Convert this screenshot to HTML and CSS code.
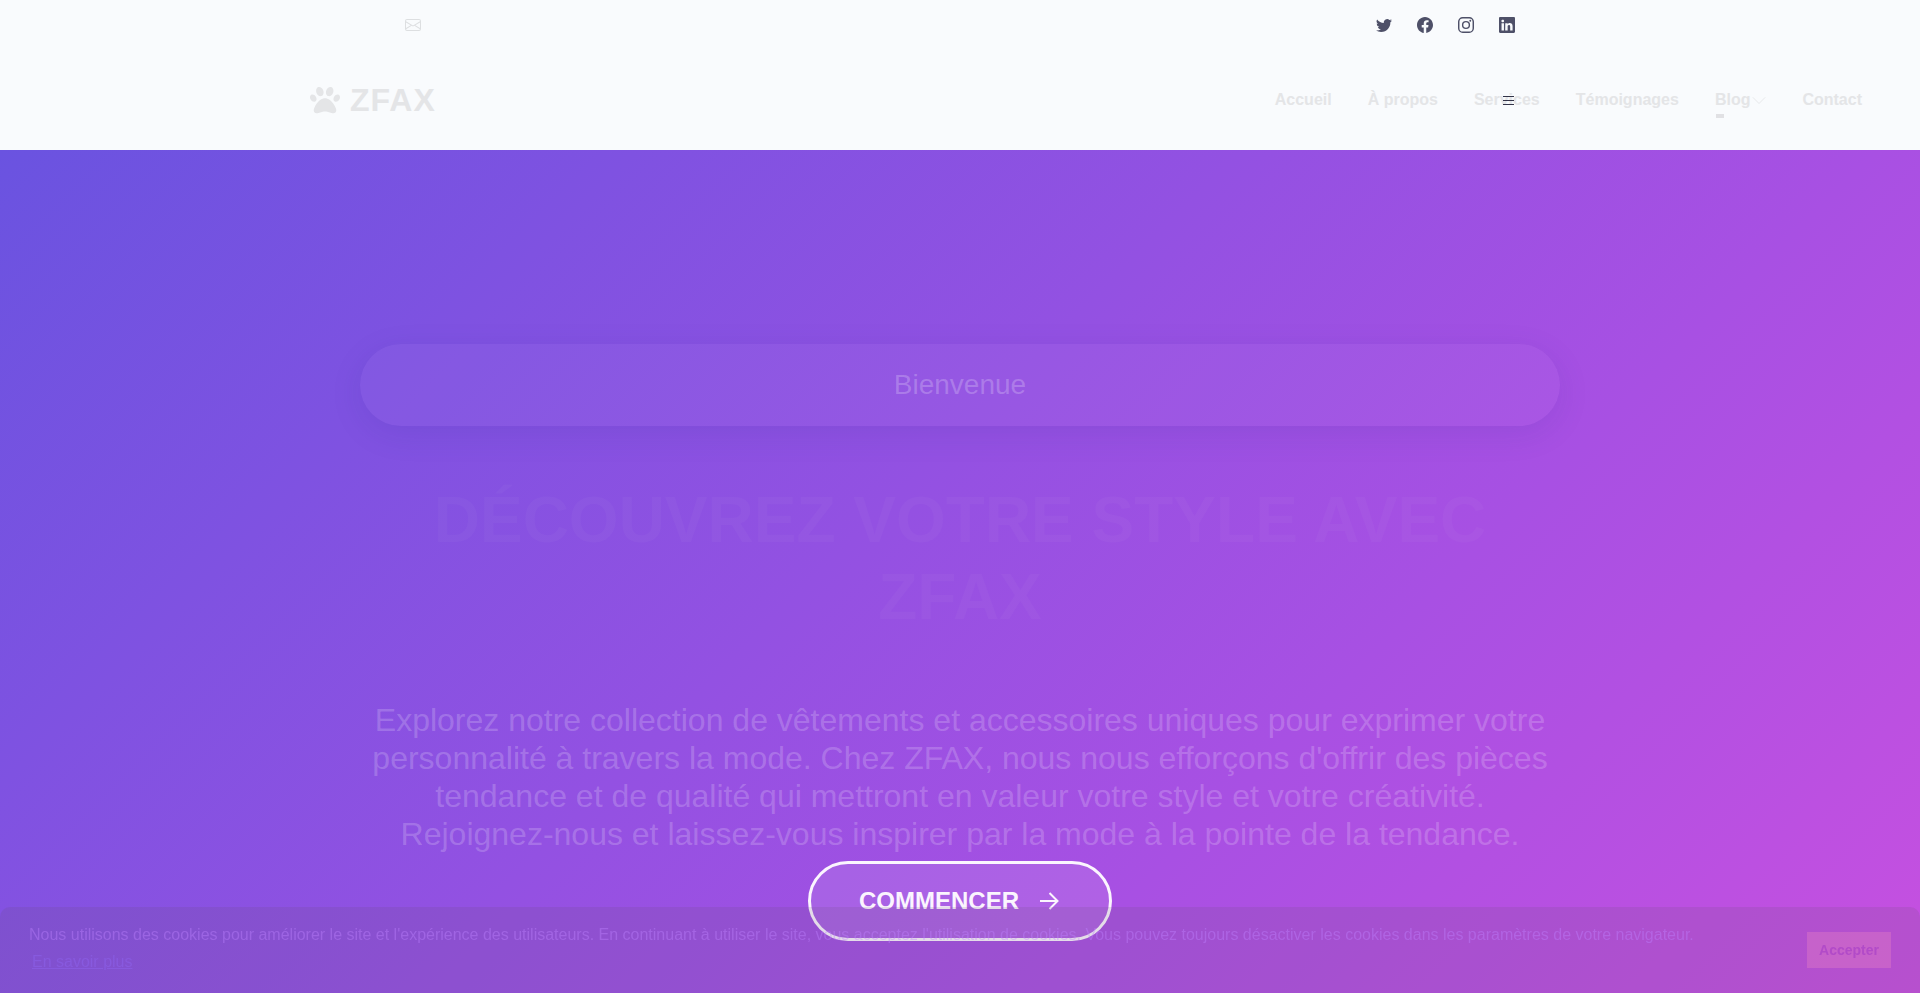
FILE: index.html
```html
<!DOCTYPE html>
<html lang="fr">
<head>
  <meta charset="UTF-8">
  <meta name="viewport" content="width=device-width, initial-scale=1.0">
  <title>ZFAX</title>

  <link rel="stylesheet" href="styles.css">
</head>
<body>
  <div class="topbar">
    <div class="topbar-inner">
      <a class="mail" href="#" aria-label="E-mail">
        <svg class="icon" viewBox="0 0 16 16"><path d="M0 4a2 2 0 0 1 2-2h12a2 2 0 0 1 2 2v8a2 2 0 0 1-2 2H2a2 2 0 0 1-2-2V4Zm2-1a1 1 0 0 0-1 1v.217l7 4.2 7-4.2V4a1 1 0 0 0-1-1H2Zm13 2.383-4.708 2.825L15 11.105V5.383Zm-.034 6.876-5.64-3.471L8 9.583l-1.326-.795-5.64 3.47A1 1 0 0 0 2 13h12a1 1 0 0 0 .966-.741ZM1 11.105l4.708-2.897L1 5.383v5.722Z"/></svg>
      </a>
      <div class="social">
        <a href="#" aria-label="Twitter">
          <svg class="icon" viewBox="0 0 16 16"><path d="M5.026 15c6.038 0 9.341-5.003 9.341-9.334 0-.14 0-.282-.006-.422A6.685 6.685 0 0 0 16 3.542a6.658 6.658 0 0 1-1.889.518 3.301 3.301 0 0 0 1.447-1.817 6.533 6.533 0 0 1-2.087.793A3.286 3.286 0 0 0 7.875 6.03a9.325 9.325 0 0 1-6.767-3.429 3.289 3.289 0 0 0 1.018 4.382A3.323 3.323 0 0 1 .64 6.575v.045a3.288 3.288 0 0 0 2.632 3.218 3.203 3.203 0 0 1-.865.115 3.23 3.23 0 0 1-.614-.057 3.283 3.283 0 0 0 3.067 2.277A6.588 6.588 0 0 1 .78 13.58a6.32 6.32 0 0 1-.78-.045A9.344 9.344 0 0 0 5.026 15z"/></svg>
        </a>
        <a href="#" aria-label="Facebook">
          <svg class="icon" viewBox="0 0 16 16"><path d="M16 8.049c0-4.446-3.582-8.05-8-8.05C3.58 0-.002 3.603-.002 8.05c0 4.017 2.926 7.347 6.75 7.951v-5.625h-2.03V8.05H6.75V6.275c0-2.017 1.195-3.131 3.022-3.131.876 0 1.791.157 1.791.157v1.98h-1.009c-.993 0-1.303.621-1.303 1.258v1.51h2.218l-.354 2.326H9.25V16c3.824-.604 6.75-3.934 6.75-7.951z"/></svg>
        </a>
        <a href="#" aria-label="Instagram">
          <svg class="icon" viewBox="0 0 16 16"><path fill-rule="evenodd" d="M4.7 0h6.6A4.7 4.7 0 0 1 16 4.7v6.6a4.7 4.7 0 0 1-4.700 4.700H4.700A4.700 4.700 0 0 1 0 11.300V4.700A4.700 4.700 0 0 1 4.700 0Zm.1 1.450A3.350 3.350 0 0 0 1.450 4.800v6.400a3.350 3.350 0 0 0 3.350 3.350h6.400a3.350 3.350 0 0 0 3.350-3.350V4.800a3.350 3.350 0 0 0-3.350-3.350H4.800ZM8 3.892a4.108 4.108 0 1 1 0 8.216 4.108 4.108 0 0 1 0-8.216Zm0 1.441a2.667 2.667 0 1 0 0 5.334 2.667 2.667 0 0 0 0-5.334Zm4.270-2.563a.96.96 0 1 1 0 1.920.96.96 0 0 1 0-1.920Z"/></svg>
        </a>
        <a href="#" aria-label="LinkedIn">
          <svg class="icon" viewBox="0 0 16 16"><path d="M0 1.146C0 .513.526 0 1.175 0h13.650C15.474 0 16 .513 16 1.146v13.708c0 .633-.526 1.146-1.175 1.146H1.175C.526 16 0 15.487 0 14.854V1.146zm4.943 12.248V6.169H2.542v7.225h2.401zm-1.200-8.212c.837 0 1.358-.554 1.358-1.248-.015-.709-.520-1.248-1.342-1.248-.822 0-1.359.540-1.359 1.248 0 .694.521 1.248 1.327 1.248h.016zm4.908 8.212V9.359c0-.216.016-.432.080-.586.173-.431.568-.878 1.232-.878.869 0 1.216.662 1.216 1.634v3.865h2.401V9.250c0-2.220-1.184-3.252-2.764-3.252-1.274 0-1.845.700-2.165 1.193v.025h-.016a5.540 5.540 0 0 1 .016-.025V6.169h-2.400c.030.678 0 7.225 0 7.225h2.400z"/></svg>
        </a>
      </div>
    </div>
  </div>

  <header class="header">
    <a class="logo" href="#">
      <svg class="paw" viewBox="0 0 512 512"><path d="M226.500 92.900c14.300 42.900-.3 86.200-32.600 96.800s-70.100-15.600-84.400-58.500s.3-86.200 32.600-96.800s70.100 15.600 84.400 58.500zM100.400 198.600c18.900 32.400 14.300 70.100-10.200 84.100s-59.700-.9-78.500-33.300S-2.700 179.300 21.800 165.300s59.700 .9 78.500 33.300zM69.200 401.200C121.600 259.900 214.700 224 256 224s134.400 35.900 186.800 177.200c3.600 9.700 5.200 20.100 5.200 30.500v1.600c0 25.800-20.900 46.700-46.700 46.700c-11.500 0-22.900-1.400-34-4.200l-88-22c-15.300-3.800-31.300-3.800-46.600 0l-88 22c-11.100 2.800-22.500 4.200-34 4.200C84.900 480 64 459.100 64 433.300v-1.600c0-10.400 1.600-20.800 5.200-30.500zM421.800 282.700c-24.500-14-29.100-51.700-10.200-84.100s54-47.300 78.500-33.300s29.100 51.700 10.200 84.100s-54 47.300-78.500 33.300zM310.100 189.700c-32.300-10.600-46.900-53.900-32.600-96.800s52.100-69.100 84.400-58.500s46.900 53.900 32.600 96.800s-52.100 69.100-84.400 58.500z"/></svg>
      <span>ZFAX</span>
    </a>
    <nav class="nav">
      <a href="#">Accueil</a>
      <a href="#">À propos</a>
      <a href="#">Services</a>
      <a href="#">Témoignages</a>
      <a class="dropdown" href="#">Blog
        <svg class="chevron" viewBox="0 0 16 16"><path d="m1 5 7 7 7-7"/></svg>
      </a>
      <a href="#">Contact</a>
    </nav>
    <button class="menu-toggle" aria-label="Menu">
      <svg class="icon" viewBox="0 0 16 16"><path d="M3 4.500h11M3 8.500h11M3 12.500h11"/></svg>
    </button>
  </header>

  <main class="hero">
    <div class="hero-inner">
      <p class="welcome">Bienvenue</p>
      <h1>Découvrez votre style avec ZFAX</h1>
      <p class="intro">Explorez notre collection de vêtements et accessoires uniques pour exprimer votre personnalité à travers la mode. Chez ZFAX, nous nous efforçons d'offrir des pièces tendance et de qualité qui mettront en valeur votre style et votre créativité. Rejoignez-nous et laissez-vous inspirer par la mode à la pointe de la tendance.</p>
      <button class="start">
        Commencer
        <svg class="arrow" viewBox="0 0 24 24"><path d="M3 12h17M12.500 4l8 8-8 8"/></svg>
      </button>
    </div>
  </main>

  <div class="cookies">
    <p>Nous utilisons des cookies pour améliorer le site et l'expérience des utilisateurs. En continuant à utiliser le site, vous acceptez l'utilisation de cookies. Vous pouvez toujours désactiver les cookies dans les paramètres de votre navigateur. <a href="#">En savoir plus</a></p>
    <button class="accept">Accepter</button>
  </div>
</body>
</html>
```

FILE: styles.css
```css
* {
  box-sizing: border-box;
}

body {
  margin: 0;
  min-height: 100vh;
  display: flex;
  flex-direction: column;
  font-family: "Liberation Sans", Arial, sans-serif;
  font-size: 16px;
  background-color: #f9fbfd;
}

a {
  color: inherit;
  text-decoration: none;
}

p, h1 {
  margin: 0;
}

.icon {
  display: block;
  width: 16px;
  height: 16px;
  fill: currentColor;
}

/* top bar */
.topbar {
  height: 50px;
}

.topbar-inner {
  max-width: 1140px;
  height: 50px;
  margin: 0 auto;
  padding: 0 15px;
  display: flex;
  align-items: center;
  justify-content: space-between;
}

.mail {
  color: #dddfe1;
}

.social {
  display: flex;
  gap: 25px;
  color: #4e5068;
}

/* header */
.header {
  position: relative;
  height: 100px;
  padding: 0 58px 0 310px;
  display: flex;
  align-items: center;
  justify-content: space-between;
  color: #e4e5e7;
}

.logo {
  display: flex;
  align-items: center;
  gap: 10px;
  font-size: 32px;
  font-weight: bold;
  letter-spacing: 1px;
}

.paw {
  width: 30px;
  height: 32px;
  fill: currentColor;
}

.nav {
  display: flex;
  gap: 36px;
  font-weight: bold;
}

.dropdown {
  position: relative;
  display: flex;
  align-items: center;
  gap: 2px;
}

.dropdown::after {
  content: "";
  position: absolute;
  left: 1px;
  bottom: -9px;
  width: 8px;
  height: 4px;
  background-color: #e1e1e4;
}

.chevron {
  width: 14px;
  height: 14px;
  fill: none;
  stroke: currentColor;
}

.menu-toggle {
  position: absolute;
  right: 404px;
  top: 42px;
  padding: 0;
  border: none;
  background: none;
  color: #333448;
  cursor: pointer;
}

.menu-toggle .icon {
  fill: none;
  stroke: currentColor;
}

/* hero */
.hero {
  flex: 1;
  padding: 194px 20px 52px;
  background: linear-gradient(135deg, #6a53e0 0%, #a850e3 68%, #c650e0 100%);
}

.hero-inner {
  max-width: 1200px;
  margin: 0 auto;
  display: flex;
  flex-direction: column;
  align-items: center;
  text-align: center;
}

.welcome {
  width: 100%;
  padding: 24px;
  border-radius: 50px;
  background-color: rgba(255, 255, 255, 0.04);
  box-shadow: 0 8px 32px rgba(31, 38, 135, 0.1);
  color: rgba(255, 255, 255, 0.22);
  font-size: 28px;
  line-height: 34px;
}

h1 {
  margin-top: 56px;
  color: rgba(255, 255, 255, 0.03);
  font-size: 64px;
  line-height: 77px;
  text-transform: uppercase;
}

.intro {
  margin-top: 65px;
  color: rgba(255, 255, 255, 0.2);
  font-size: 32px;
  line-height: 38px;
}

.start {
  display: flex;
  align-items: center;
  gap: 18px;
  height: 80px;
  margin-top: 8px;
  padding: 0 48px;
  border: 3px solid #fbf5fe;
  border-radius: 50px;
  background-color: rgba(255, 255, 255, 0.1);
  color: #fbf5fe;
  font-family: inherit;
  font-size: 24px;
  font-weight: bold;
  text-transform: uppercase;
  cursor: pointer;
}

.arrow {
  width: 24px;
  height: 24px;
  fill: none;
  stroke: currentColor;
  stroke-width: 2;
}

/* cookie banner */
.cookies {
  position: fixed;
  left: 0;
  right: 0;
  bottom: 0;
  min-height: 86px;
  padding: 14px 29px 18px;
  display: flex;
  align-items: center;
  justify-content: space-between;
  gap: 100px;
  border-radius: 10px 10px 0 0;
  background-color: rgba(100, 80, 106, 0.15);
  color: rgba(190, 130, 255, 0.4);
  line-height: 27px;
}

.cookies a {
  margin-left: 3px;
  color: rgba(150, 110, 255, 0.3);
  text-decoration: underline;
}

.accept {
  height: 36px;
  margin-top: 4px;
  padding: 0 12px;
  border: none;
  background-color: rgba(225, 125, 195, 0.4);
  color: #b24bc8;
  font-family: inherit;
  font-size: 14px;
  font-weight: bold;
  cursor: pointer;
}
```
